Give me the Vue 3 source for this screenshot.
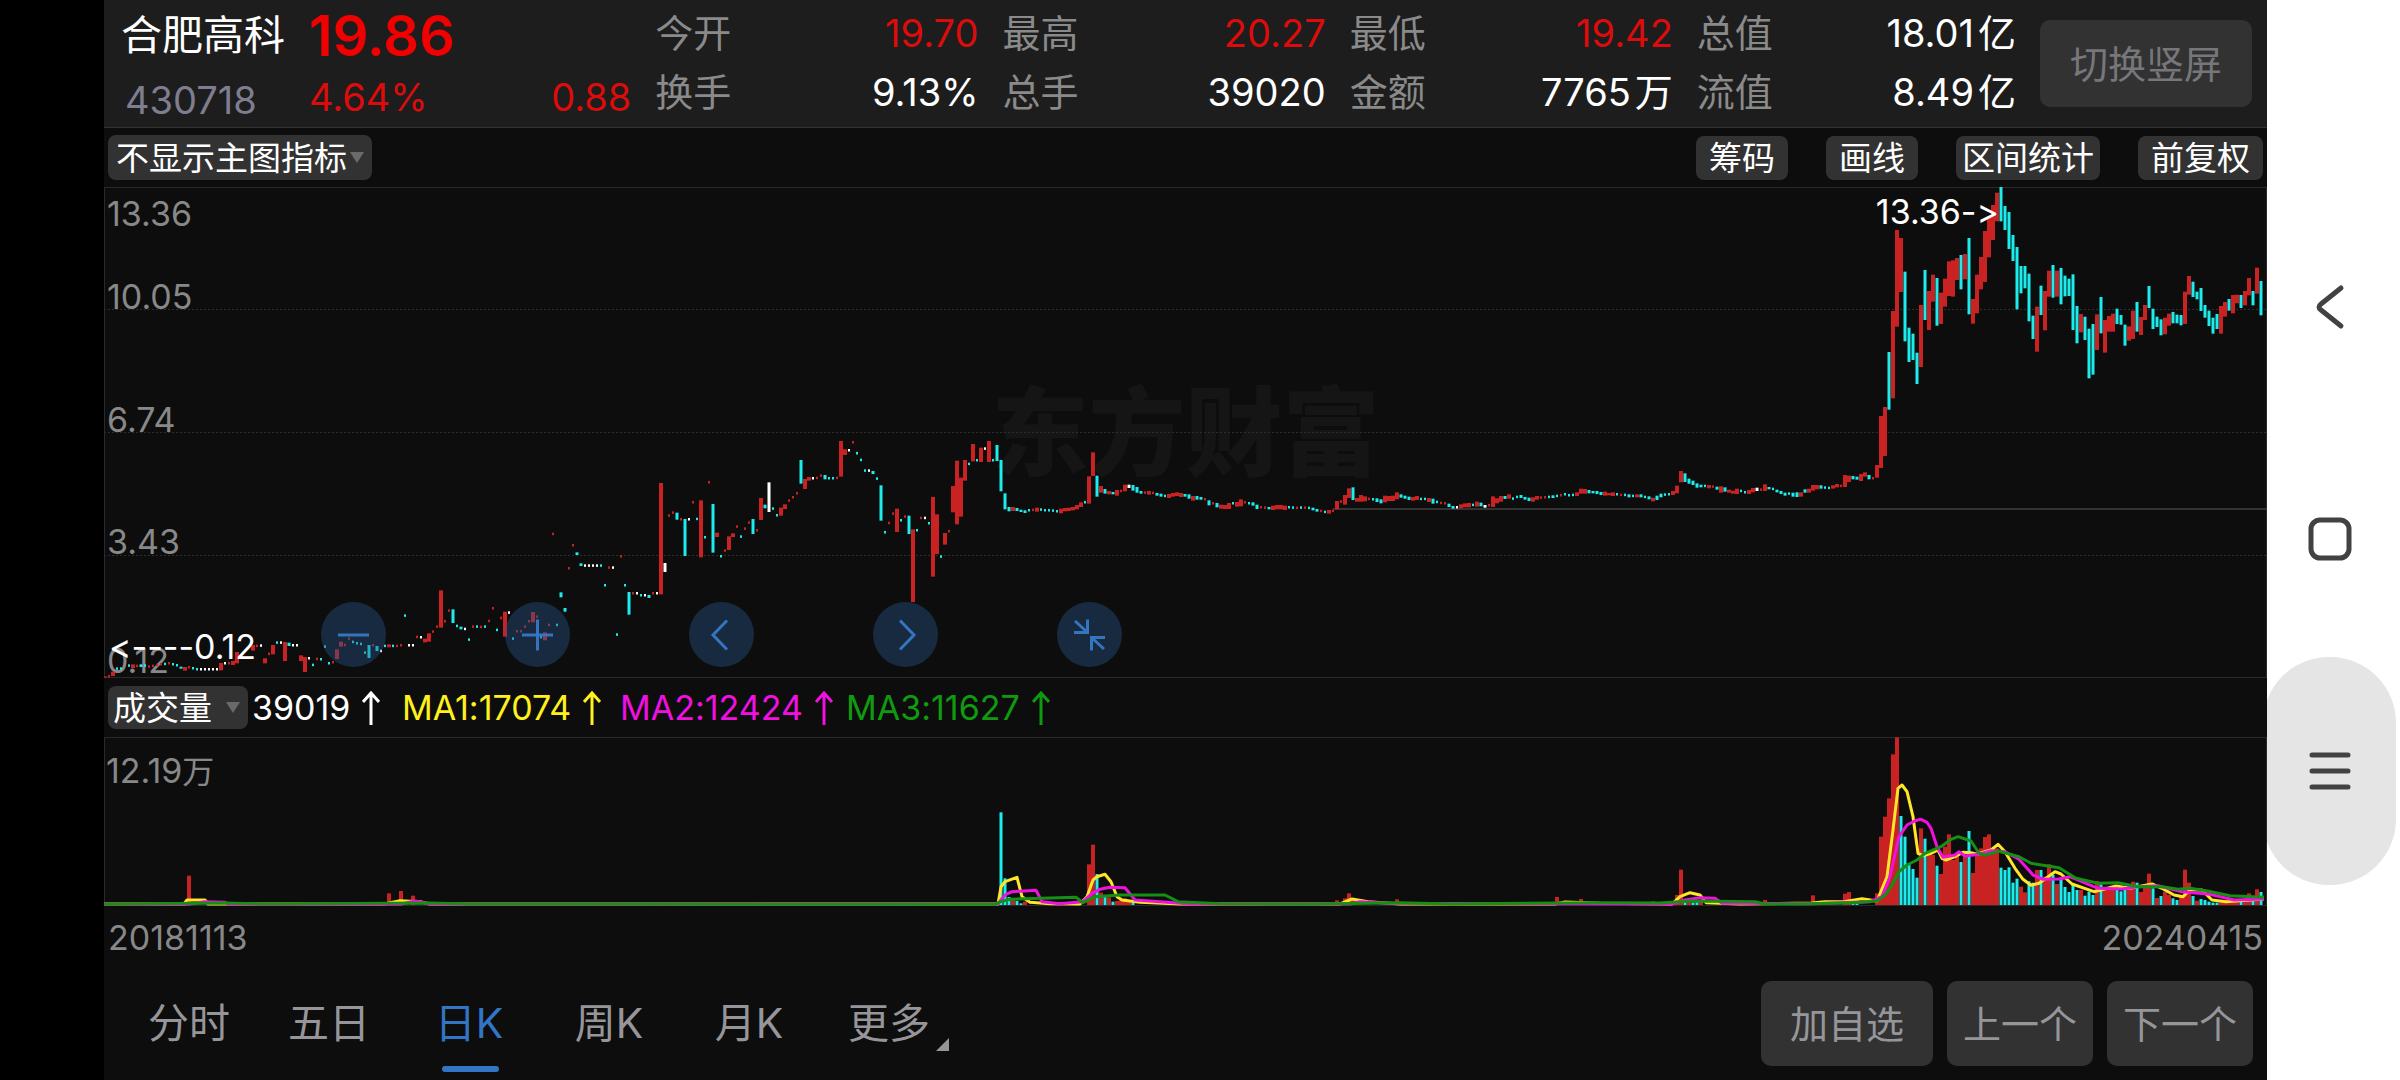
<script setup>
  import { computed, ref } from 'vue';

  const indicator = ref('none');
  const subIndicator = ref('vol');
  const activeTab = ref('日K');

  const stats = [
    [{ label: '今开', value: '19.70', up: true }, { label: '换手', value: '9.13%' }],
    [{ label: '最高', value: '20.27', up: true }, { label: '总手', value: '39020' }],
    [{ label: '最低', value: '19.42', up: true }, { label: '金额', value: '7765', unit: '万' }],
    [{ label: '总值', value: '18.01', unit: '亿' }, { label: '流值', value: '8.49', unit: '亿' }]
  ];

  const tools = ['筹码', '画线', '区间统计', '前复权'];
  const tabs = ['分时', '五日', '日K', '周K', '月K', '更多'];
  const actions = ['加自选', '上一个', '下一个'];

  const averages = [
    { text: '39019', type: 'vol' },
    { text: 'MA1:17074', type: 'ma1' },
    { text: 'MA2:12424', type: 'ma2' },
    { text: 'MA3:11627', type: 'ma3' }
  ];

  const axis = [
    { text: '13.36', type: 'tick-first' },
    { text: '10.05', type: 'tick-second' },
    { text: '6.74', type: 'tick-third' },
    { text: '3.43', type: 'tick-fourth' },
    { text: '0.12', type: 'tick-last' }
  ];

  const controls = [
    { name: '缩小', path: 'M17 33h31' },
    { name: '放大', path: 'M17 33h31M32.500 17.500v31' },
    { name: '左移', path: 'M38 18.500L24 33l14 14.500' },
    { name: '右移', path: 'M27 18.500L41 33L27 47.500' },
    { name: '退出全屏', path: 'M18 19L30 30M17 30.500h13.500v-13M47 47L35 36M48 35.500H34.500v13' }
  ];

  // One token per day, 4px apart: R up, C down, W flat with "high-low";
  // lower case is a single-price day. Heights are thirds of a pixel below `top`.
  const series = [
    {
      x: 105,
      top: 213,
      days: 'R829-833 r829 R815-828 c806 c806 . c797 R793-804 r798 C793-801 c797 r800 r798 r795 r793 c792 r790 c793 c796 C800-806 R801-812 r802 c805 c808 w808 w808 w808 w808 w808 R789-811 w790 r790 R783-795 R756-790 . . . R735-752 r738 w737 R775-790 r762 R735-763 c728 w728 R726-783 C728-738 w736 w736 R766-783 R771-816 w775 c795 r777 c778 c740 c790 r787 R748-777 R725-740 r735 r716 c726 c730 c732 c758 C735-774 r736 C738-753 w753 c738 R733-742 c738 r738 r736 c647 w736 w736 r711 w712 R716-727 R700-725 r695 r680 R571-683 r664 r632 C628-669 c678 C680-688 w687 c719 r680 c680 r681 c680 r663 r625 c690 r654 R635-710 w638 c716 r694 r694 r680 r664 R636-667 r650 c712 R697-721 r675 r402 c675 C577-592 C624-635 r505 r436 C457-465'
    },
    {
      x: 581,
      top: 213,
      days: 'C490-498 w497 w497 w497 w497 c497 c556 r503 w503 c704 r469 c556 C576-644 r580 w580 c586 w586 C585-594 r580 w580 R249-583 W489-516 r347 r338 C338-359 r358 C357-468 w358 r307 c357 R301-472 c412 r247 C312-458 R398-411 c469 r452 R409-450 R400-411 r380 c410 r386 r368 C357-402 r391 R294-360 C314-325 W247-336 c326 c346 R323-347 R313-327 r302 r292 r280 C180-251 R237-267 R231-242 w235 r234 r227 C225-238 c235 c235 r234 R123-230 R148-165 w151 r127 c160 c180 c212 w212 C213-222 c236 C256-362 c397 r369 r341 R326-396 c361 r350 C347-402 R388-606 c391 r354 w354 c370 R291-530 R343-462 c470 R399-434 r394 R258-337 R182-373 R233-350 R180-242 c192 R132-184 c181 R143-186 w146 R123-186 c181 C135-183 C180-274 C280-328 C321-334 R321-333 C324-333 C329-336 C331-339 c331 r330 R323-335 c329 c331 c331 c332 c334 R326-340 R324-334 R323-333 R321-331 R315-328 R307-321 c307 R229-311 R157-228 C227-290 R258-278 C267-281 R273-283 C276-283 R270-287 r273 R254-274 W254-264 C255-272 C261-278'
    },
    {
      x: 1141,
      top: 153,
      days: 'C453-461 r458 R453-464 r459 C459-467 C461-470 c468 R462-474 R459-470 R457-468 R459-471 C462-470 C463-476 R468-482 C468-479 C471-479 r478 C481-496 r490 C489-502 R494-506 R495-507 R489-507 c490 R486-500 R478-499 r487 c490 C487-497 C494-507 r502 r503 C501-508 R497-510 R495-508 R495-508 R497-510 c502 c503 r504 c503 r503 c504 C503-511 C507-515 r513 c516 R510-521 r513 R483-508 r485 R465-494 R445-474 C442-480 R474-485 R465-485 R469-484 r477 c478 C475-486 C478-490 R467-487 R468-483 R467-483 R457-478 C463-473 C467-476 C470-480 R471-482 R468-480 c477 c477 R474-486 C476-491 c486 r489 r490 C491-501 C498-506 w502 R493-505 R490-502 R489-502 c495 R485-500 C488-499 W495-503 r496 R469-501 R475-490 R468-485 C468-477 R463-476 c476 c471 C465-474 C471-479 C473-483 R472-485 R468-479 r473 r472 c471 C466-474 c468 r466 c463 c466 c465 R457-468 R446-461 R447-461 C450-460 C453-460 C453-462 C456-465 R455-467 R459-466 R457-468 c463 r465 c465 C463-472 c468 R463-472 C463-472 c471 C469-478 R473-484 C467-480 C461-472 c464 c463 R453-465 R437-460 R393-427 C400-426 C416-431 C422-435 C430-443 C434-442 c438 R435-445 r440 C440-449 R439-458 C442-455 R449-458 R452-461 R446-462 c453 c457 R450-462 R444-457 W443-453 r449 R433-453 C441-448 c447 C449-457 C453-462 C458-467 c461 C458-470 C457-471'
    },
    {
      x: 1801,
      top: -7,
      days: 'R937-950 C928-938 R926-938 R915-932 R915-928 C916-926 c923 c924 R916-926 R912-922 r918 R885-921 R887-906 C888-898 C890-899 R882-903 R877-890 C885-898 r895 R855-893 R708-864 R681-828 C516-689 R393-655 R150-440 R174-336 C275-484 C443-546 C461-540 C518-612 R375-561 C270-420 R333-450 R284-365 C294-437 R338-432 R296-380 R244-348 R241-350 R234-300 C225-328 R222-298 C174-403 R357-431 R284-400 R231-328 R153-306 R110-232 R75-180 R38-124 C21-124 C78-150 C96-207 C165-243 C201-388 C258-340 C258-325 C281-424 C407-477 R380-515 C317-405 R333-451 R272-350 C255-353 R272-350 C264-373 C287-349 C296-348 C283-450 C378-490 R402-457 C410-480 C446-595 C432-584 R403-510 C351-460 R420-518 R408-455 R401-455 C386-432 C405-434 C434-497 R439-482 R392-477 C366-455 R411-465 R375-420 C318-384 C386-447 C410-441 C418-466 R413-463 R401-437 C396-430 C404-430 C405-436 R335-432 R288-344 C305-351 C335-358 C324-393 C375-413 C392-438 C413-461 C402-447 R378-461 R366-410 C357-392 R345-400 R344-370 C345-384 R333-376 R294-346 C333-376 R263-341 C303-406'
    }
  ];

  const volumeSeries = [
    { x: 189, days: 'R467' },
    { x: 389, days: 'R520' },
    { x: 401, days: 'R513' },
    { x: 413, days: 'R527' },
    { x: 1001, days: 'C277 C475 C531 R540 C543 C550 R545' },
    { x: 1089, days: 'R433 R374 C462 R518 C530 R532 C545 R543 R541 R535 R545 C548' },
    { x: 1337, days: 'R541 . R535 R520 R538' },
    { x: 1397, days: 'R538' },
    { x: 1557, days: 'R531' },
    { x: 1581, days: 'R537' },
    { x: 1653, days: 'R544' },
    { x: 1677, days: 'R525 R449 C545 R547 C547 C546 R545' },
    { x: 1765, days: 'R540' },
    { x: 1813, days: 'R526' },
    { x: 1845, days: 'R521 R516 C550 C551' },
    { x: 1877, days: 'R520 R350 R290 R235 R103 R52 C288 C350 C430 C447 C473 R325 C356 R405 R405 C437 R462 R380 R343 R420 R408 C426 R405 C333 R459 R405 R385 R351 R343 R385 R385 C443 C450 C442 C488 C476 R500 R517 C484 C488 R450 C450 R470 R433 C465 R492 C478 C501 C516 C490 C510 R510 C527 C515 C525 R483 C493 R500 R505 R500 C510 C514 C507 R500 R485 C488 R516 R500 R461 C505 R534 C528 R515 R525 C535 C540 R525 R449 R488 C528 R542 C537 C540 C545 C548 C548 R547 R546 R543 R545 R543 C546 R540 R520 C543 R508 C516' }
  ];

  const volumeLines = [
    { type: 'ma1', points: '104,552 184,552 187,540 205,540 208,552 384,552 400,542 420,545 430,552 998,552 1001,500 1005,485 1017,472 1022,530 1030,547 1050,551 1080,552 1087,530 1093,480 1097,470 1105,463 1111,485 1117,530 1122,540 1140,547 1180,552 1340,552 1352,537 1368,545 1400,552 1555,552 1565,546 1600,550 1672,552 1680,530 1690,518 1700,525 1706,548 1740,552 1812,549 1825,545 1844,545 1862,536 1877,543 1887,470 1893,330 1898,205 1902,195 1907,215 1913,290 1918,400 1923,407 1931,400 1938,390 1942,415 1946,420 1955,410 1963,397 1971,398 1977,403 1985,395 1991,390 1998,373 2005,395 2015,445 2023,478 2031,496 2039,490 2055,455 2061,462 2072,492 2094,515 2116,498 2130,505 2152,492 2162,505 2174,525 2183,530 2190,510 2202,510 2212,540 2226,545 2264,537' },
    { type: 'ma2', points: '104,553 188,553 205,545 225,547 228,553 400,553 415,543 425,548 430,553 998,551 1005,525 1012,515 1036,511 1042,545 1060,551 1083,545 1092,520 1100,508 1110,502 1125,503 1135,540 1160,545 1190,552 1350,552 1360,545 1390,550 1672,552 1685,540 1700,533 1715,535 1722,550 1812,551 1870,545 1882,530 1890,470 1899,350 1907,315 1915,302 1921,298 1927,307 1931,325 1937,380 1943,412 1955,405 1959,395 1965,408 1979,403 1991,392 2005,395 2019,418 2033,465 2043,478 2059,477 2070,470 2098,505 2122,507 2138,500 2158,497 2182,515 2210,523 2234,540 2264,537' },
    { type: 'ma3', points: '104,553 225,549 268,552 430,549 470,552 996,553 1000,545 1010,538 1076,532 1083,548 1095,530 1120,525 1165,525 1178,545 1220,551 1300,553 1400,548 1450,552 1600,548 1660,549 1690,543 1755,545 1765,552 1800,552 1852,548 1877,543 1885,525 1891,500 1899,455 1907,435 1917,420 1925,400 1941,380 1951,358 1958,350 1971,363 1979,400 1985,405 1999,394 2019,410 2031,430 2059,443 2076,475 2098,490 2118,488 2138,500 2162,500 2178,508 2190,505 2206,512 2230,527 2264,532' }
  ];

  const kinds = { r: 'up', c: 'down', w: 'flat' };

  const candles = computed(() => series.flatMap(({ x, top, days }) =>
    days.split(' ').map((day, i) => {
      if (day === '.') return null;
      const thin = day[0] === day[0].toLowerCase();
      const [high, low] = day.slice(1).split('-').map(Number);
      const width = thin ? 2 : day[0] === 'R' ? 4 : 3;
      return {
        x: x + i * 4 - 104 - width / 2,
        y: top + (thin ? high - 4 : high) / 3,
        width,
        height: thin ? 2.5 : (low - high) / 3,
        type: kinds[day[0].toLowerCase()]
      };
    }).filter(Boolean)
  ));

  const volumes = computed(() => volumeSeries.flatMap(({ x, days }) =>
    days.split(' ').map((day, i) => {
      if (day === '.') return null;
      const high = Number(day.slice(1));
      const width = day[0] === 'R' ? 4 : 3;
      return {
        x: x + i * 4 - 104 - width / 2,
        y: high / 3 - 17,
        width,
        height: (555 - high) / 3,
        type: kinds[day[0].toLowerCase()]
      };
    }).filter(Boolean)
  ));

  const toPoints = (points) => points.split(' ').map((point) => {
    const [x, y] = point.split(',').map(Number);
    return `${x - 104},${(y / 3 - 17).toFixed(1)}`;
  }).join(' ');
</script>

<template>
  <div class="screen">
    <main class="quote">
      <header class="summary">
        <div class="stock">
          <h1 class="stock-name">合肥高科</h1>
          <span class="stock-price">19.86</span>
          <span class="stock-code">430718</span>
          <span class="stock-change"><span>4.64%</span><span>0.88</span></span>
        </div>
        <dl class="stats" v-for="(column, i) in stats" :key="i">
          <div class="stat" v-for="item in column" :key="item.label">
            <dt>{{ item.label }}</dt>
            <dd :class="{ rise: item.up }">{{ item.value }}<span class="unit" v-if="item.unit">{{ item.unit }}</span></dd>
          </div>
        </dl>
        <button type="button" class="btn btn-rotate">切换竖屏</button>
      </header>

      <div class="toolbar">
        <div class="picker picker-main">
          <select v-model="indicator" aria-label="主图指标">
            <option value="none">不显示主图指标</option>
          </select>
          <svg viewBox="0 0 14 11" aria-hidden="true"><path d="M0 0h14L7 11z" /></svg>
        </div>
        <div class="tools">
          <button type="button" class="chip" v-for="tool in tools" :key="tool" :class="{ 'chip-tight': tool.length > 3 }">{{ tool }}</button>
        </div>
      </div>

      <section class="chart chart-price" aria-label="K线图">
        <div class="watermark">东方财富</div>
        <span class="tick" v-for="tick in axis" :key="tick.text" :class="tick.type">{{ tick.text }}</span>
        <svg class="plot" viewBox="0 0 2163 491" preserveAspectRatio="none">
          <path class="grid" d="M0 122.500H2163M0 245.500H2163M0 368.500H2163" />
          <path class="level" d="M1229 322H2163" />
          <rect
            v-for="(bar, i) in candles"
            :key="i"
            :x="bar.x"
            :y="bar.y"
            :width="bar.width"
            :height="bar.height"
            :class="bar.type"
          />
        </svg>
        <span class="mark mark-high">13.36-&gt;</span>
        <span class="mark mark-low">&lt;----0.12</span>
        <div class="controls">
          <button type="button" class="control" v-for="control in controls" :key="control.name" :aria-label="control.name">
            <svg viewBox="0 0 65 65"><path :d="control.path" /></svg>
          </button>
        </div>
      </section>

      <div class="toolbar toolbar-volume">
        <div class="picker picker-sub">
          <select v-model="subIndicator" aria-label="副图指标">
            <option value="vol">成交量</option>
          </select>
          <svg viewBox="0 0 14 11" aria-hidden="true"><path d="M0 0h14L7 11z" /></svg>
        </div>
        <div class="averages">
          <span class="average" v-for="item in averages" :key="item.type" :class="item.type">
            {{ item.text }}
            <svg viewBox="0 0 18 34" aria-hidden="true"><path d="M9 34V2M1 11l8-9 8 9" /></svg>
          </span>
        </div>
      </div>

      <section class="chart chart-volume" aria-label="成交量图">
        <span class="tick tick-volume">12.19<span class="unit">万</span></span>
        <svg class="plot" viewBox="0 0 2163 169" preserveAspectRatio="none">
          <rect
            v-for="(bar, i) in volumes"
            :key="i"
            :x="bar.x"
            :y="bar.y"
            :width="bar.width"
            :height="bar.height"
            :class="bar.type"
          />
          <polyline
            v-for="line in volumeLines"
            :key="line.type"
            :points="toPoints(line.points)"
            :class="line.type"
          />
        </svg>
      </section>

      <div class="dates">
        <time datetime="2018-11-13">20181113</time>
        <time datetime="2024-04-15">20240415</time>
      </div>

      <footer class="bottom">
        <nav class="tabs">
          <button
            type="button"
            class="tab"
            v-for="tab in tabs"
            :key="tab"
            :class="{ active: tab === activeTab, more: tab === '更多' }"
            @click="activeTab = tab"
          >{{ tab }}</button>
        </nav>
        <div class="actions">
          <button type="button" class="btn btn-action" v-for="action in actions" :key="action">{{ action }}</button>
        </div>
      </footer>
    </main>

    <aside class="system">
      <button type="button" class="system-btn" aria-label="返回">
        <svg viewBox="0 0 50 50"><path d="M36 6L16 22Q12 25 16 28L36 44" /></svg>
      </button>
      <button type="button" class="system-btn" aria-label="主屏幕">
        <svg viewBox="0 0 50 50"><rect x="6" y="6" width="38" height="38" rx="9" /></svg>
      </button>
      <button type="button" class="system-btn pressed" aria-label="最近任务">
        <svg viewBox="0 0 50 50"><path d="M7 9h36M7 25h36M7 41h36" /></svg>
      </button>
    </aside>
  </div>
</template>

<style>
  body {
    background: #000;
  }
</style>

<style scoped>
  .screen {
    display: grid;
    grid-template-columns: minmax(0, 1fr) 133px;
    min-height: 100vh;
    padding-left: 104px;
    box-sizing: border-box;
    background: #000;
    font-family: Inter, "Noto Sans CJK SC", sans-serif;
    font-size: 34px;
    font-variant-ligatures: none;
    line-height: 40px;
  }

  button,
  select {
    margin: 0;
    padding: 0;
    border: 0;
    background: none;
    font: inherit;
    color: inherit;
    white-space: nowrap;
    cursor: pointer;
  }

  svg {
    display: block;
  }

  .quote {
    display: flex;
    flex-direction: column;
    background: #0d0d0d;
  }

  .summary {
    display: grid;
    grid-template-columns: 551fr repeat(3, 347fr) 343fr 212px;
    box-sizing: border-box;
    height: 128px;
    padding-right: 15px;
    border-bottom: 1px solid #333;
    background: #1d1d1d;
    font-size: 38px;
  }

  .stock {
    display: grid;
    grid-template-columns: 188px 1fr;
    grid-template-rows: 70px 54px;
    align-items: center;
    align-content: start;
    padding: 0 24px 0 17px;
    white-space: nowrap;
  }

  .stock-name {
    margin: 0;
    font-size: 41px;
    font-weight: 400;
    color: #fff;
  }

  .stock-price {
    padding-top: 2px;
    font-size: 56px;
    font-weight: 600;
    color: #f00000;
  }

  .stock-code {
    padding: 6px 0 0 4px;
    color: #7f7d90;
  }

  .stock-change {
    display: flex;
    justify-content: space-between;
    color: #dc0c0c;
  }

  .stats {
    display: grid;
    grid-template-rows: 59px 59px;
    align-content: start;
    align-items: center;
    margin: 0;
    padding: 3px 24px 0 0;
  }

  .stat {
    display: flex;
    justify-content: space-between;
    color: #8a8a8a;
  }

  .stat dd {
    margin: 0;
    color: #fff;
  }

  .stat dd.rise {
    color: #dc0c0c;
  }

  .stat .unit {
    padding-left: 4px;
  }

  .btn {
    border-radius: 10px;
    background: #323232;
    font-size: 38px;
    color: #96969a;
  }

  .btn-rotate {
    height: 87px;
    margin-top: 20px;
    color: #77777b;
  }

  .toolbar {
    display: flex;
    justify-content: space-between;
    align-items: center;
    height: 59px;
    padding: 0 4px;
    font-size: 33px;
    color: #fff;
  }

  .picker {
    display: flex;
    align-items: center;
    position: relative;
    height: 45px;
    border-radius: 8px;
    background: #323232;
  }

  .picker select {
    width: 100%;
    height: 100%;
    padding: 0 24px 0 8px;
    appearance: none;
  }

  .picker svg {
    position: absolute;
    right: 8px;
    width: 14px;
    fill: #6a6a6a;
    pointer-events: none;
  }

  .picker-main {
    width: 264px;
  }

  .picker-sub {
    width: 140px;
    height: 43px;
  }

  .picker-sub select {
    padding-left: 5px;
  }

  .tools {
    display: flex;
    gap: 38px;
  }

  .chip {
    height: 44px;
    padding: 0 13px;
    border-radius: 8px;
    background: #323232;
  }

  .chip-tight {
    padding: 0 6px;
  }

  .toolbar-volume {
    justify-content: flex-start;
    gap: 4px;
    font-size: 33px;
  }

  .averages {
    display: grid;
    grid-template-columns: 150px 218px 226px auto;
    font-size: 34px;
  }

  .average {
    display: flex;
    align-items: center;
    gap: 12px;
    white-space: nowrap;
  }

  .average svg {
    width: 18px;
    fill: none;
    stroke: currentColor;
    stroke-width: 3;
  }

  .average.vol {
    color: #fff;
  }

  .average.ma1 {
    color: #fff01e;
  }

  .average.ma2 {
    color: #f010e0;
  }

  .average.ma3 {
    color: #109a10;
  }

  .chart {
    position: relative;
    box-sizing: border-box;
    box-shadow: inset 0 0 0 1px #2a2a2a;
  }

  .chart-price {
    flex: 491 1 0;
  }

  .chart-volume {
    flex: 169 1 0;
  }

  .plot {
    position: absolute;
    inset: 0;
    width: 100%;
    height: 100%;
  }

  .plot .grid {
    stroke: #2e2e2e;
    stroke-dasharray: 2 2;
  }

  .plot .level {
    stroke: #333;
    stroke-width: 2;
  }

  .plot .up {
    fill: #c82222;
  }

  .plot .down {
    fill: #1cecec;
  }

  .plot .flat {
    fill: #fff;
  }

  .plot polyline {
    fill: none;
    stroke-width: 3;
    stroke-linejoin: round;
  }

  .plot .ma1 {
    stroke: #ffe628;
  }

  .plot .ma2 {
    stroke: #f010e0;
  }

  .plot .ma3 {
    stroke: #149014;
  }

  .watermark {
    display: flex;
    justify-content: center;
    align-items: center;
    position: absolute;
    inset: 0;
    font-size: 97px;
    font-weight: 900;
    color: #151515;
  }

  .tick {
    position: absolute;
    left: 3px;
    line-height: 26px;
    color: #888;
  }

  .tick-first {
    top: 14px;
  }

  .tick-second {
    bottom: 75%;
  }

  .tick-third {
    bottom: 50%;
  }

  .tick-fourth {
    bottom: 25%;
  }

  .tick-last {
    bottom: 4px;
  }

  .tick-volume {
    top: 21px;
    left: 2px;
  }

  .tick-volume .unit {
    font-size: 32px;
  }

  .mark {
    position: absolute;
    color: #fff;
  }

  .mark-high {
    top: 5px;
    right: 268px;
  }

  .mark-low {
    bottom: 11px;
    left: 5px;
  }

  .controls {
    display: flex;
    gap: 119px;
    position: absolute;
    bottom: 11px;
    left: 217px;
  }

  .control {
    width: 65px;
    height: 65px;
    border-radius: 50%;
    background: rgba(41, 88, 143, 0.4);
  }

  .control path {
    fill: none;
    stroke: #3575c0;
    stroke-width: 3;
  }

  .dates {
    display: flex;
    justify-content: space-between;
    box-sizing: border-box;
    height: 64px;
    padding: 12px 4px 0;
    color: #888;
  }

  .bottom {
    display: flex;
    justify-content: space-between;
    height: 110px;
    padding: 0 14px 0 15px;
    font-size: 41px;
    color: #96969a;
  }

  .tabs {
    display: grid;
    grid-template-columns: repeat(6, 140px);
  }

  .tab {
    position: relative;
    padding-bottom: 4px;
  }

  .tab.active {
    color: #3175c4;
  }

  .tab.active::after {
    content: '';
    position: absolute;
    bottom: 8px;
    left: 43px;
    width: 57px;
    height: 6px;
    border-radius: 3px;
    background: #3175c4;
  }

  .tab.more::after {
    content: '';
    position: absolute;
    right: 10px;
    bottom: 29px;
    border-bottom: 13px solid #96969a;
    border-left: 13px solid transparent;
  }

  .actions {
    display: flex;
    gap: 14px;
    align-items: center;
    padding-bottom: 3px;
  }

  .btn-action {
    height: 85px;
    padding: 0 16px;
  }

  .btn-action:first-child {
    padding: 0 29px;
  }

  .system {
    display: flex;
    flex-direction: column;
    align-items: center;
    justify-content: center;
    gap: 4px;
    overflow: hidden;
    padding: 0 8px 3px 0;
    background: #fff;
  }

  .system-btn {
    display: flex;
    flex-shrink: 0;
    align-items: center;
    justify-content: center;
    width: 133px;
    height: 228px;
    border-radius: 66px;
  }

  .system-btn.pressed {
    background: #e5e5e5;
  }

  .system-btn svg {
    width: 50px;
    fill: none;
    stroke: #424242;
    stroke-width: 5;
    stroke-linecap: round;
    stroke-linejoin: round;
  }
</style>
